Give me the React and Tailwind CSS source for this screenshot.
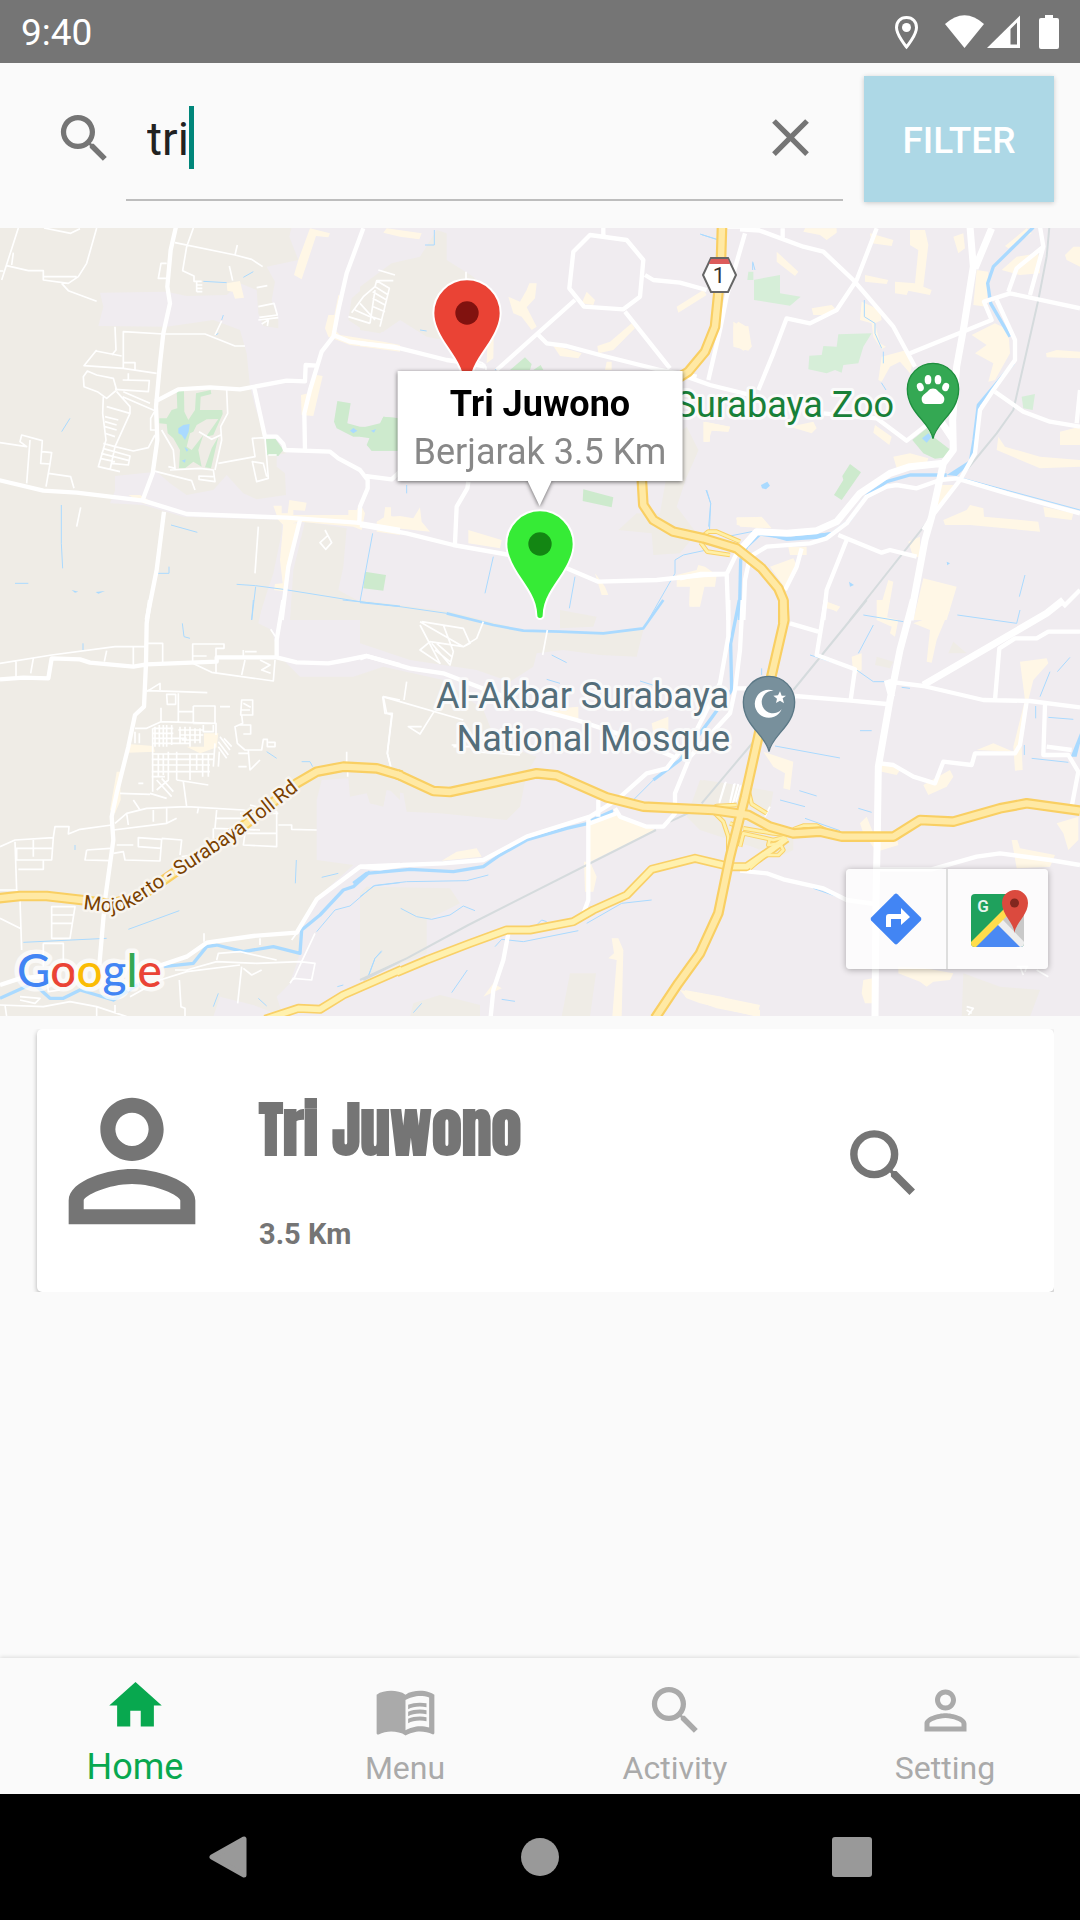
import { useState } from "react";
import { MdClose, MdHome, MdMenuBook, MdPersonOutline, MdSearch } from "react-icons/md";

/* Map drawing: six tiles, each drawn at three units per pixel. */
const TILES = {
  nw: "translate(0 220) scale(0.33333)",
  n: "translate(360 220) scale(0.33333)",
  ne: "translate(680 220) scale(0.33333)",
  sw: "translate(0 600) scale(0.33333)",
  s: "translate(360 600) scale(0.33333)",
  se: "translate(680 600) scale(0.33333)",
};

function Areas({ fill, tiles }) {
  return Object.entries(tiles).map(([tile, d]) => (
    <path key={tile} transform={TILES[tile]} d={d} fill={fill} />
  ));
}

function Lines({ color, width, tiles }) {
  return Object.entries(tiles).map(([tile, d]) => (
    <path
      key={tile}
      transform={TILES[tile]}
      d={d}
      fill="none"
      stroke={color}
      strokeWidth={width}
      strokeLinejoin="round"
    />
  ));
}

const RURAL = {
  nw: "M0 0H880L868 50 895 120 800 140 825 185 815 240 835 300 835 325 790 318 775 280 770 210 720 190 680 225 560 228 500 215 300 218 310 260 295 318 500 320 640 300 720 330 740 400 750 500 765 560 795 650 860 700 830 705 830 740 855 760 858 825 770 838 730 820 680 765 640 810 560 825 510 790 470 755 345 768 345 812 330 850 430 855 550 890 845 900 845 940 820 1060 800 1120 775 1200H0z M915 905L1040 925 1030 1040 1015 1110 1080 1145 1200 1160V1200H870L880 1050z M1055 235L1130 170 1200 150V300L1150 335 1090 330 1045 300z",
  n: "M95 130L180 110 230 30 260 40 260 120 340 170 375 210 360 330 300 370 200 350 120 300 60 340 0 330V200z M940 650L980 620 1015 690 980 770 950 860 1010 940 960 1000 880 1005 875 940 775 930 830 880 900 880z",
  ne: "M0 630L55 690 20 770 0 790z",
  sw: "M0 0H790L775 70 815 90 835 165 900 230 1060 230 1150 200 1200 235V600L1160 560 1150 620 1110 610 1100 580 1050 590 1045 535 965 540 950 600 950 780 1060 795 950 895 895 995 900 1060 870 1150 830 1190 850 1250 760 1215 660 1190 640 1250H0z",
  s: "M0 0L270 35 490 90 600 100 850 90 830 170 720 165 610 150 530 160 520 200 450 245 350 210 150 180 0 130z M0 230L70 200 250 240 370 330 410 430 530 470 500 520 480 620 440 660 240 640 140 635 130 580 80 570 70 615 30 610 20 560 0 560z M600 30L710 50 700 80 600 85z M20 860L270 865 300 910 240 940 200 960V1060L0 1140V880z M630 1120H708L690 1250H605z M160 1210L240 1185 360 1215V1250H150z M1030 540L1100 550 1190 570 1200 750 1130 720 1060 690 1020 660z",
  se: "M60 540L200 560 280 575 270 630 240 660 340 700 340 750 310 765 180 730 60 690 20 650z M850 1120L960 1160 1080 1170 1050 1250H845z M820 125L860 160 805 160z M590 170L640 185 630 205 585 195z",
};

const CREAM = {
  nw: "M930 25L990 40 985 52 948 48 905 178 882 165 895 120z M680 190L720 183 732 233 705 236 698 215 682 212z M1015 225L1030 230 1005 330 1020 345 1150 365 1200 375V395L1050 375 985 350 975 325 985 285 1003 285z M950 465L968 468 940 588 905 585 903 525 925 520z M820 857H845V880H863L868 840 920 848 915 872 880 870 880 885H1045V870H1070L1080 850 1095 880 1085 930 1060 920 900 905 850 915 835 900z M850 910H895L870 1030 860 1115 822 1110 825 1092 848 1090 840 1020z M385 825H420L480 860 430 850z M1130 905L1155 890V862H1173V888L1200 900V945L1130 935z",
  n: "M80 25L185 40 178 58 120 50 70 38z M445 230L480 245 500 210 508 190H530L525 235 500 262 530 320 515 330 485 290 460 280z M950 260L1030 210 1040 225 955 278z M665 250L680 215 705 240 700 255z M712 378L750 365 815 310 825 325 760 390 715 400z M740 425H755V450H735z M1120 305L1145 320 1165 318 1175 380 1150 392 1120 370z M385 300H402L400 415 380 430z M578 375L665 400 655 415 600 408z M1030 605L1110 620 1105 635 1050 630V665H1030z M75 865L90 890 120 888 160 895 180 862 185 905 210 935 110 925 70 905z M325 930L425 960 420 985 325 970z M950 1065L1010 1050 1015 1035 1035 1040 1070 1065 1065 1100H1020L1000 1160 988 1155 990 1100H950z M1130 892H1200V925L1130 915z M705 1060L735 1100 745 1125 725 1125z",
  ne: "M375 25H470V38L440 60 420 45 370 35z M290 95L355 155 345 168 290 125z M690 30H735L745 75 730 200 755 210 750 225 685 212 680 225 645 220V185L705 190 715 90 690 75z M570 40L640 60 635 78 575 70z M555 165L625 180 620 192 555 185z M1040 25L1055 40 985 85 975 78z M820 50L850 40 855 85 835 100z M1155 105L1180 80H1200V140L1160 120z M160 320L175 305 200 320 215 380 205 392 160 380z M395 265L455 255 465 265 440 285 400 285z M545 245L600 270 605 300 585 310 600 370 618 380 605 388 580 350 575 310 540 300z M965 150L1010 110 1075 100 1080 160 1020 165z M890 150L925 155 920 260 880 255z M875 345L945 310 985 330 990 400 945 480 925 485 940 430 885 400 920 375z M1098 400L1130 390 1200 395V415L1100 412z M605 410L680 390 700 420 690 460 660 425 630 440 605 485 595 480z M585 615L635 650 628 675 580 638z M330 620L400 605 410 625 395 640z M75 605L150 620 145 635 95 632 85 665H72z M640 710L690 700 745 715 740 730 650 745z M955 650L975 680 1080 710 1200 720V740L1080 745 950 690z M1140 635L1200 620V675H1140z M790 900L860 870 870 855 910 865 912 890 1075 905 1080 935 870 915 795 915z M1090 860L1180 880 1175 900 1095 890z M168 895L245 890 275 925 180 920z M270 1040L340 1015 355 1045 320 1110 305 1090z M325 980H380V1005H330z M685 965L720 950V1010L700 1012z M730 1075L830 1100 800 1200H700z M625 1080L640 1085 620 1200H590z M30 1090L60 1060 80 1070 60 1160H28z M780 795H825L770 880z M440 1145L480 1160 470 1172 440 1165z",
  sw: "M385 432L460 438 465 455 385 458z M350 515H360L362 600 345 640 330 630z M612 400H655L650 440H612z M560 440L655 440 600 460z",
  s: "M690 655L780 645 885 690 690 785z M290 755L350 745 365 770 245 782z M672 785H690L710 830 700 875H675z M755 1015H775L790 1050 785 1250H757L770 1080 745 1075 762 1060z M975 1170L1085 1190 1200 1230V1250L1070 1225 975 1190z M370 1190L400 1150 425 1165z M540 330L655 320V355L600 350z M875 370L925 350 925 390 945 410 880 400z",
  se: "M590 0H630L615 50 655 60 645 110 630 100 635 80 590 60z M700 70L755 50 760 0H815L795 60 770 120 755 188 740 185 750 90z M440 5L480 20 470 35 440 20z M515 170L545 160V210L520 225z M250 455L340 485 330 570 310 565 315 520 280 500z M1020 185L1100 175 1105 190 1060 240 1045 300 1025 440 1028 510 1005 512 1000 440 1035 300z M600 480L660 510 650 525 605 515z M730 555L810 510 820 530 800 560 745 585z M890 450L940 430 1000 455z M560 650L580 700 650 710 655 735 590 755 550 700 540 670z M995 720H1012L1020 745 1125 765 1110 800 1010 805z M1130 670L1195 650V720L1165 750 1150 700z M655 1100L735 1105 820 1120 810 1140 760 1145 740 1160 720 1145 655 1120z M550 1140L578 1135V1210H555L545 1180z M0 1170L120 1190 240 1215 230 1250 60 1210 20 1195z M785 20L810 30 780 90z",
};

const GREEN = {
  nw: "M530 513H552L553 575 565 600 585 570 588 520 632 510 634 522 602 530 600 570 667 570 668 582 640 645 618 650 655 597 620 598 590 615 580 635 570 640 560 680 575 690 610 645 595 690 605 740 580 725 555 745 537 745 540 690 520 655 503 640 500 612 478 610V595L500 595 515 570 532 565z M655 650L633 745 615 742 635 685z M797 658L825 655 850 690 835 708 800 705z M1012 543L1052 550 1042 610 1080 620 1140 622 1150 590 1200 595V692H1115L1100 675 1110 650 1060 650 1010 625 1002 605z M1095 1055L1158 1065 1150 1112 1090 1105z",
  n: "M0 625L60 610 70 590 115 595V692L35 692 22 675 30 655 0 650z M670 808L760 832 755 862 668 843z M450 450L495 412 515 432 510 450z M520 450L542 435 550 450z",
  ne: "M510 732L543 757 485 840 462 825 490 780 487 768z M740 625L760 650 812 690 800 712 765 716 730 700 697 660z",
};

const GREEN_LIGHT = {
  ne: "M205 155H220V180L300 165 300 220 362 230 330 257 222 240 222 180 202 180z M475 343L575 340 550 380 535 430 490 435 485 458 465 450 440 460 385 448 388 407 425 405 430 378 470 380z M1025 530L1065 522 1058 570 1030 565z",
};

const WATER = {
  nw: "M535 625L550 615 569 612 566 635 555 660 545 645 535 640z M1050 632L1060 624 1072 632 1060 640z M1113 632L1128 627 1122 638z M545 722L557 718 555 728z M553 680L565 690 560 695z M215 1110L235 1115 225 1118z M287 1116L315 1113 295 1121z",
  ne: "M243 795L262 785 270 797 258 808 246 805z M726 655L745 640 755 650 740 668z M800 765L870 720 860 740 830 768z M240 940L340 952 460 935 440 955 320 963z M507 1085L522 1095 510 1100z M800 1025L810 1030 802 1036z",
  s: "M690 658L758 628 760 640 695 668z",
  se: "M1172 470L1200 400V430L1190 470z",
};

const RIVER_WIDE = {
  ne: "M1060 22L940 140 923 190 932 250 990 350M1000 430L895 555 882 660 872 720M800 765H690L620 785 562 825 505 905 455 942 330 955 240 942 200 980 182 1020 178 1200",
  s: "M1138 0L1112 130 1115 270 1050 360 960 480 880 540M685 670L620 685 500 720 420 765 370 800 280 815 150 808 20 820-20 850",
  sw: "M1110 815L1060 860 1030 870 960 945 905 990 900 1060 820 1040 730 1055 650 1035 620 1040 580 1090 490 1100M420 1150L340 1200 240 1170 190 1195 150 1195 100 1150 0 1195",
};

const STREAMS = {
  nw: "M710 1093L767 1097 850 1108 1080 1145 1200 1160M1118 940L1080 1145M767 1100L755 1200M184 855V970L188 1045M210 595L185 635M513 915L592 937M470 1060H507V1040M45 1090H85M610 184L680 188M730 172L760 155M665 300L670 285M647 345L655 340",
  n: "M223 30V75L195 75M1020 42L1070 58M945 1060V1020L970 1005 1040 990M865 1200L945 1060M1038 810L1052 850 1048 940M1100 950L1200 930M400 1010L375 1120M645 1070L628 1165M140 795V820M180 330L200 333M1178 125L1185 150M405 450L440 430",
  ne: "M65 44L110 58M218 128V150M553 240V290L585 310V340L605 385M610 395V430M604 488L618 510M80 810L92 850 86 920M830 770L1200 870M1035 1065L1018 1130",
  sw: "M760 0L755 60M1028 0L1200 18M547 70L552 110 570 115M249 130V150M800 455L830 475M905 485H930L938 500M225 735V750M385 988L538 932M70 1027L320 1015M1200 848L1120 858 1050 918 1005 930 950 995M889 780L886 850M965 832L1015 820M1145 1052L1125 1075 1105 1130M1012 1160L1030 1155M655 1180L640 1220M775 1195L800 1218",
  s: "M0 8L120 20 260 40 400 75 490 92M575 165L620 188M560 238L600 250M840 243L900 262M880 540L820 600M0 890L45 856 140 845 320 842 385 825M122 925L170 950 215 958 270 945 310 918 345 932M22 1135L45 1075 65 1055M405 1040L425 1018 490 1025 655 992M530 975L545 960 560 965M680 970L785 910 875 900M322 1110L275 1178M160 1238L185 1210M425 1198L465 1204",
  se: "M832 45L1010 70 1020 30M550 45L670 65M580 75L535 160M390 165L530 210 580 245 620 245M245 205V225M540 392H575M285 438L480 474M358 572L410 588M300 600L375 620M535 625L575 637M375 655L480 692M1170 172L1132 215M1110 215L1080 290M1067 318V355M1105 352L1180 358M1033 435V465M1055 475L1165 487M400 865L500 900M665 262L690 265",
};

const CANAL = {
  s: "M260 40L400 75 490 92 600 95 730 100 850 85 910 0",
};

const RAIL = {
  ne: "M1108 22L1100 110 1075 240 1000 570 950 640 860 750 755 890 510 1200",
  se: "M560 0L340 270M225 420L65 610",
  s: "M1005 630L930 665M888 690L325 975 140 1075 0 1140",
  sw: "M1200 1085L1090 1140",
};

const ROADS_MAJOR = {
  nw: "M528 20L512 90 502 200 510 250 490 340 480 430 468 560 472 660 458 760 428 840M492 875L470 1050 440 1200M-5 780L130 812 230 818 430 842 560 882 860 893 1070 908 1200 930M1090 25L1040 160 1015 270 1000 350 965 395 930 510 913 580 915 690M465 545L535 508 630 502 720 508 860 482 915 484 917 435 950 437M762 500L795 650 830 650 850 672 855 690 990 695 1015 715 1080 750 1103 780 1103 805 1080 860 1078 905M1095 768L1175 778 1200 755M1000 345L1050 365 1200 385M900 900L865 1040 845 1200",
  sw: "M450 0L440 70 438 190 432 320 405 345 385 440 350 580 335 650 340 720 315 900 298 1095M850 0L830 120V172M0 238L70 233 145 235 155 175 240 178 270 188 400 200 440 193 650 185V172H830L890 187 985 190 1040 180 1100 168 1200 195M0 1155L60 1135 140 1128M440 1110L560 1070 620 1028 760 1008 890 998 950 898 1080 800 1200 795",
  n: "M1078 20H1200M0 370L100 380 260 420 330 430 375 440M620 1045L715 1085 890 1080 1030 1065 1100 1062M0 915L140 940 280 975 450 1005M325 785L322 805 290 860 285 970M690 45L640 95 628 205 672 260 790 268 840 230 850 120 800 60zM730 20V45M645 240L410 450M530 340L560 370 620 378 720 405 900 450 1010 470M795 275L930 445M855 165L880 180 960 188 1040 210M1155 40L1100 230 1080 330 1045 480",
  ne: "M180 28L240 32 370 80 430 95 520 180 640 320 705 440M590 25L530 180 470 270 390 310 320 295 280 400 235 510M308 25V55M20 470L90 495 230 530M430 580L590 595 680 662 740 615M690 400L935 300 912 245 990 220 1200 265M950 240L1005 360V420L940 510 900 570 885 700 840 780 755 890 730 930M1080 20L1090 80 1010 145 985 215M1090 80L1050 225M945 515L1030 575 1110 605 1200 620M1200 510L1190 610M475 945L605 998 630 990 710 1010M500 960L440 1110 430 1200M175 990L140 1062 145 1200M0 1075L60 1062H140M190 1200L195 1080 210 1010 260 980 390 970 440 955 500 910 560 830 620 800 650 795 710 805 780 780 830 775 980 820 1200 880M365 985L350 1040 315 1110M1200 1110L1150 1160",
  s: "M1105 0V110L1080 250 1010 390 920 505 860 520 770 600 690 650 500 710 370 780 250 790 130 795 60 805 0 800M1148 0L1140 150 1125 270 1110 340 990 470 945 580V640L910 680 860 680 780 650 765 625M0 175L20 168 150 205 250 220 380 270 540 330 650 360 800 410 940 470M715 600V650M690 670L770 640M685 655V900L672 935M445 1000L430 1080 400 1170 392 1250",
  se: "M330 70L415 95M437 0L410 165 525 208 512 300M165 265H200M345 288L512 302 620 312M625 245L730 258 910 300 1050 303 1200 322M945 300L958 145 1005 115 1070 115 1105 95H1200M1040 305L1020 435 1005 460H885L875 495 790 485 765 550 700 530 640 495 600 490M1095 315L1090 465H1165L1195 515 1175 620M1100 440L1175 450M180 812L260 820 310 838 430 865 500 900 585 912M580 808H755L890 770 960 760 1110 780 1200 795",
};

const ROADS_WIDE = {
  ne: "M870 20L880 140 850 330 830 440 818 600 820 690 790 730 690 740 630 760 540 820 470 905 410 932 320 940 230 935 185 985M935 25L885 145M780 600L820 660M790 730L755 890 735 960 690 1200",
  se: "M700 0L660 150 630 300 595 500 592 700 588 900 585 1250M1150 0L1100 40 730 255M622 240L635 290",
};

const ROADS_MINOR = {
  nw: "M55 24L5 180M0 153H10M20 137L85 152 130 152V180L205 190 235 170 260 130 290 24M130 170H230M185 190L205 212 290 244M132 24L212 40 240 26M40 98L35 135M500 130H483L475 175H500M580 24L560 80 548 152 582 168V184H605M590 195H607M590 205H607M590 215H607M590 185V215M525 68L705 105 755 118 788 140M712 75L705 105M688 138L698 182M770 203L802 197M775 260L822 250 832 285 778 292M775 300L835 293M785 312L805 300 802 318M345 320L348 390 335 405M370 445V335L490 342 615 342 705 378H735M645 345L665 303M288 393L365 408M290 390L252 437 370 445 470 460M370 428H405V450M385 460V480M368 480L448 482 445 515 345 508M370 515L450 550M368 530L465 572 452 595V630H465M250 470L262 453 290 465 340 475 350 510 320 535 292 515 252 500zM310 530L308 580 318 660 295 740 360 755M320 560L390 580M350 515L390 560V580L345 680 330 750M315 590L355 600M315 605L350 615M315 620L350 630M315 640L345 650M310 670L345 680M308 685L390 708 385 735 335 730M303 700L388 722M300 715L345 725M345 680L400 693 445 683 465 645M485 630L520 690 525 745 505 740M458 752L575 782 585 810M510 750L600 745 640 750 645 785 597 778V768L640 770M680 510L683 580 662 620 665 660 645 750M597 635L635 658 662 645M655 730L765 710 757 655 795 653 805 775 770 785 757 725 790 730 800 770M805 705H830M0 668L80 680 60 665 65 645 127 662 122 730 150 732 155 698 127 695M90 660L80 790M150 732L138 800M145 760L212 770 222 805M242 862L230 920M775 920L765 1060M975 930L995 968 977 988 960 968 985 945M1055 278L1090 230 1125 200 1130 182 1180 182M1130 182L1168 205 1140 320M1045 290L1110 310M1065 270L1110 290M1080 250L1125 300M1125 210L1110 310M1125 200L1165 225M1118 215L1160 240M1118 235L1155 255M1120 260L1155 275M1115 290L1145 300M1135 150L1185 165",
  n: "M318 155V185M355 425Q380 430 378 450",
  sw: "M0 190L155 165 345 140H435M48 185V230M100 175L92 220M320 152L313 185M400 140V200M440 130H488V190M578 183V132H672V145H648V185M580 168H620M578 190L635 217 820 243 825 180M648 190V217M735 155H770M730 150V168M735 180L725 225M780 180L810 195 785 210 812 220M812 88L830 115M440 275L480 250V270M440 272L540 275 622 278M500 283H527V313H502zM535 280V365M535 335H580M580 318H645V370H580V318M660 320H690M483 323V365L440 385H405M483 365L648 370V405M725 300H758V345H722zM730 310L752 322M725 330H750M725 345L728 370 705 380 712 430 735 450 785 450 790 418H802V440H825V427H805M715 375H752V402H730M715 460H745M745 452L750 510 780 480M715 500H740M458 385V575M465 380V440M478 375V440M490 375V440M500 375V440M515 375V435M540 380V430M555 380V430M570 380V440M585 385V430M600 385V430M460 385H520M460 400H520M460 415H560M460 430H570M535 390H610M540 405H610M545 420H600M610 375V395H640V375M405 395V430M418 400V430M660 410L690 450M672 415L695 440M655 425L685 465M655 440L680 475M645 430L640 500M658 455L655 500M455 462H640M455 478H640M455 495H630M455 515H630M475 460V530M490 460V525M505 455V540L470 570M530 455V540M570 460V540M590 460V510M608 460V530M625 460V530M530 540L625 555M455 530H495M470 540L515 590M485 535L520 575M450 580L500 595M360 580L450 583M415 550H430M550 545L560 620M345 670L380 640 440 625 560 620 730 630 770 640M380 640L385 675M400 600L420 630M340 690L500 670 530 655M460 630V665M500 625V670M595 625L592 640M650 630L645 685 780 690M645 655H725M640 685V760M0 740L45 720 160 713 155 780H50V745M45 725L50 870 60 900 65 1050M55 808H130V780M45 745H155M100 720V770M0 870H50M0 955L60 985M160 712L165 680H207L205 702 240 688 335 675M260 750L255 780 330 782M260 750L330 745M340 760L370 755 375 780 480 783 485 718 415 713V740L485 745M350 735H400M485 715L545 720 540 765M545 770L640 760M735 700L730 735 830 740V635L750 615M720 640H835M835 675H875V688L950 690M730 700H830M155 920H225L210 1015 155 1015zM155 945H220M155 970H215M130 1030H190V1100M130 1030V1100M612 1000V1025M780 1015V1035M875 1020L890 1000M525 1110L560 1110 650 1085 770 1090 900 1085 945 1090 935 1140 880 1135 870 1150M945 1000L905 1085 880 1140M650 1080L655 1060 720 1055 830 1080M480 1140L560 1115 720 1095M390 1190L480 1140M60 1190L120 1195 105 1210 60 1200M0 1215L130 1220 210 1205 290 1220 380 1250M290 1220V1250M345 1215V1240M15 1215L20 1250M538 1140L543 1220 555 1225V1250M725 1100L713 1210M730 1105L755 1125 785 1110M1200 300L1150 290 1160 340 1175 345 1162 460 1172 500M1040 455V490M1043 510V530M140 1130L145 1175 180 1170",
  s: "M140 245L132 300M68 290L310 360M68 290L75 340H97L82 460 92 498M222 335L180 402 145 380 185 380M562 90L548 165M370 65L350 115 310 140 180 65M180 75L240 190 180 150 210 125 310 140 330 130 310 85 185 65M250 75L280 155 270 195 215 130M230 130L275 170M225 150L270 185M280 440H330M275 435H300M340 455L480 465M1098 545L1078 610M1125 550L1110 610M1135 552L1118 610",
  se: "M135 548L118 605M162 552L150 605M175 552L162 605M182 556L168 605M270 620L255 650M1010 1100H1045M1020 1100L1030 1125M1040 1100L1035 1115M1070 1110L1105 1130M860 1220L880 1225 865 1245M860 1230L875 1240",
};

const TOLL = {
  n: "M1086 20L1082 150 1065 320 1035 395 985 455 930 490M845 770L850 855 880 900 940 935 1030 955 1130 985 1205 1045 1255 1105 1270 1140V1210",
  sw: "M-5 895L60 888H140L245 900 330 912 420 890 520 820 740 670 890 550 950 515 1030 500 1130 505 1205 527",
  s: "M110 522L220 573 270 576 400 548 530 520 590 526 740 592 850 620 1060 630 1165 645 1230 680 1300 700 1380 695 1445 710H1600L1680 660 1780 665 1920 625 2000 610 2160 632",
  se: "M310 0L313 60 275 225 235 410 195 590 150 770 115 940 60 1060-5 1150-75 1255",
};
const HIGHWAY = {
  sw: "M795 1258L895 1225 960 1228 1030 1185 1205 1108",
  s: "M110 1118L200 1080 330 1030 440 990H510L640 965 700 930 800 885 875 808 1005 775 1110 800H1160L1240 745 1280 715",
};
const RAMPS = {
  n: "M1020 955L1045 935H1070L1140 965M1022 968L1042 995 1110 1005",
  se: "M90 628L110 618 170 615M105 640L130 665 145 710V760M150 670L175 680M205 570L215 612 260 640M190 685L280 700 330 705M180 740L190 700 280 720 320 710M270 715L265 735 300 730 310 750 295 765 255 765 210 805M340 688L370 677H410L440 692",
};

const MARKER =
  "M-98 0A98 98 0 0 1 98 0C98 30 83 60 66 87C36 132 9 166 8 214A8 8 0 0 1-8 214C-9 166-36 132-66 87C-83 60-98 30-98 0z";
const POI = "M0 149C-8 100-77 72-77 0A77 77 0 0 1 77 0C77 72 8 100 0 149z";

function Marker({ x, y, fill, dot }) {
  return (
    <g transform={`translate(${x} ${y}) scale(0.33333)`}>
      <path d={MARKER} fill={fill} stroke="#fff" strokeWidth="12" paintOrder="stroke" />
      <circle r="35" fill={dot} />
    </g>
  );
}

function MapDrawing() {
  return (
    <svg viewBox="0 228 1080 788" className="block h-full w-full" role="img" aria-label="Map of Surabaya">
      <rect y="228" width="1080" height="788" fill="#f0ecf0" />
      <Areas fill="#efece6" tiles={RURAL} />
      <Areas fill="#fff7e6" tiles={CREAM} />
      <Areas fill="#cdeacd" tiles={GREEN} />
      <Areas fill="#d6eed8" tiles={GREEN_LIGHT} />
      <Areas fill="#aadaff" tiles={WATER} />
      <Lines color="#aadaff" width="3" tiles={STREAMS} />
      <Lines color="#aadaff" width="8" tiles={CANAL} />
      <Lines color="#aadaff" width="10" tiles={RIVER_WIDE} />
      <Lines color="#d5dbdd" width="6" tiles={RAIL} />
      <Lines color="#fff" width="5" tiles={ROADS_MINOR} />
      <Lines color="#fff" width="13" tiles={ROADS_MAJOR} />
      <Lines color="#fff" width="21" tiles={ROADS_WIDE} />
      <Lines color="#fad168" width="14" tiles={RAMPS} />
      <Lines color="#f9d067" width="27" tiles={HIGHWAY} />
      <Lines color="#fff1ae" width="17" tiles={HIGHWAY} />
      <Lines color="#fff0a8" width="8" tiles={RAMPS} />
      <Lines color="#f9cf63" width="32" tiles={TOLL} />
      <Lines color="#ffe9a4" width="19" tiles={TOLL} />

      {/* Road shield */}
      <path d="M703 275L711 258H728L736 275 728 292H711z" fill="#fff" stroke="#666" strokeWidth="2" />
      <path d="M711 259H728L730 264H709z" fill="#dd5b5b" />
      <text x="719" y="283" textAnchor="middle" fontSize="22" fill="#333">1</text>

      {/* Place names */}
      <g fontSize="36" textAnchor="end" stroke="#fafafa" strokeWidth="6" strokeLinejoin="round" paintOrder="stroke">
        <text x="894" y="417" fill="#188038">Surabaya Zoo</text>
        <text x="729" y="708" fill="#546e7a">Al-Akbar Surabaya</text>
        <text x="730" y="751" fill="#546e7a">National Mosque</text>
      </g>
      <path id="toll-road-label" d="M83 909L108 912Q122 913 138 903L182 874 240 836 310 781" fill="none" />
      <text fontSize="20" fill="#7a4100" stroke="#f8f5ef" strokeWidth="5" strokeLinejoin="round" paintOrder="stroke">
        <textPath href="#toll-road-label">Mojokerto - Surabaya Toll Rd</textPath>
      </text>

      {/* Zoo */}
      <g transform="translate(933 389) scale(0.33333)">
        <path d={POI} fill="#34a853" stroke="#1e8e3e" strokeWidth="4" />
        <g fill="#fff">
          <ellipse cx="-38" cy="-6" rx="10" ry="13" transform="rotate(-20 -38 -6)" />
          <ellipse cx="-15" cy="-28" rx="10" ry="14" />
          <ellipse cx="15" cy="-28" rx="10" ry="14" />
          <ellipse cx="38" cy="-6" rx="10" ry="13" transform="rotate(20 38 -6)" />
          <path d="M-34 30C-34 18-22 14-15 6C-8-4 8-4 15 6C22 14 34 18 34 30C34 42 26 46 18 45H-18C-26 46-34 42-34 30z" />
        </g>
      </g>
      {/* Mosque */}
      <g transform="translate(769 702) scale(0.33333)">
        <path d={POI} fill="#78909c" stroke="#5b7886" strokeWidth="4" />
        <path d="M14-34A42 42 0 1 0 38 22A34 34 0 1 1 14-34z" fill="#fff" />
        <path d="M33-32L38-19 51-19 41-11 45 4 33-4 21 3 24-10 13-19 27-20z" fill="#fff" />
      </g>

      <Marker x="467" y="313" fill="#ea4335" dot="#81120f" />
      <Marker x="540" y="544" fill="#36eb36" dot="#138613" />

      <text
        x="17"
        y="987"
        fontSize="46"
        fontWeight="500"
        stroke="#ffffff"
        strokeOpacity="0.7"
        strokeWidth="9"
        strokeLinejoin="round"
        paintOrder="stroke"
        className="font-['Lato',sans-serif]"
      >
        <tspan fill="#4285f4">G</tspan>
        <tspan fill="#ea4335">o</tspan>
        <tspan fill="#fbbc04">o</tspan>
        <tspan fill="#4285f4">g</tspan>
        <tspan fill="#34a853">l</tspan>
        <tspan fill="#ea4335">e</tspan>
      </text>
    </svg>
  );
}

function DirectionsIcon() {
  return (
    <svg viewBox="0 0 52 52" className="size-[52px]" aria-hidden="true">
      <path d="M24.500 1.200Q26 0 27.500 1.200L50.800 24.500Q52 26 50.800 27.500L27.500 50.800Q26 52 24.500 50.800L1.200 27.500Q0 26 1.200 24.500z" fill="#4285f4" />
      <path d="M16 34V24Q16 21 19 21H31V15L40 24 31 32V26H21V34z" fill="#fff" />
    </svg>
  );
}

function MapsIcon() {
  return (
    <svg viewBox="0 0 58 58" className="ml-1 size-[58px]" aria-hidden="true">
      <clipPath id="maps-tile">
        <rect x="0" y="4" width="53" height="53" rx="4" />
      </clipPath>
      <g clipPath="url(#maps-tile)">
        <rect y="4" width="53" height="53" fill="#1fa15d" />
        <path d="M53 4V57L28 34 38 20z" fill="#c9c9c9" />
        <path d="M0 62L27 33 53 58V62z" fill="#4a89f3" />
        <path d="M26 34L31 29 58 57H49z" fill="#eee" />
        <path d="M-3 55L38 14 42 20-1 63z" fill="#ffdd4b" />
      </g>
      <text x="12" y="22" textAnchor="middle" fontSize="17" fontWeight="600" fill="#e8f5ee">G</text>
      <path d="M43.500 43C43 33 31 25 31 13A13 13 0 0 1 57 13C57 25 44.500 33 43.500 43z" fill="#db4a3e" />
      <circle cx="43.500" cy="13" r="4.500" fill="#81271f" />
    </svg>
  );
}

function StatusIcons() {
  return (
    <svg viewBox="895 0 166 63" className="h-[63px] w-[166px]" role="img" aria-label="Location on, Wi-Fi, mobile signal, battery full">
      <path d="M906.500 16.500C900 16.500 896.500 21 896.500 26.500C896.500 34 906.500 46 906.500 46S916.500 34 916.500 26.500C916.500 21 913 16.500 906.500 16.500z" fill="none" stroke="#fff" strokeWidth="3" />
      <circle cx="906.500" cy="26.500" r="4.500" fill="#fff" />
      <path d="M945 23Q964.500 5.500 984 23L964.500 47z" fill="#fff" />
      <path d="M987 47L1020 14.500V47z" fill="#fff" />
      <path d="M1010.500 28L1017 21.500V43.500H1010.500z" fill="#757575" />
      <path d="M1045 14H1053V17H1057Q1059 17 1059 19V46Q1059 48 1057 48H1041Q1039 48 1039 46V19Q1039 17 1041 17H1045z" fill="#fff" />
    </svg>
  );
}

const NAV = [
  { label: "Home", Icon: MdHome },
  { label: "Menu", Icon: MdMenuBook },
  { label: "Activity", Icon: MdSearch },
  { label: "Setting", Icon: MdPersonOutline },
];

export default function App() {
  const [query, setQuery] = useState("tri");

  return (
    <div className="flex min-h-screen flex-col bg-[#fafafa] font-['Roboto',sans-serif] text-[#757575]">
      <div className="flex h-[63px] items-center justify-between bg-[#757575] pt-[2px] pr-[19px] pl-[21px] text-white">
        <span className="text-[37px] leading-none">9:40</span>
        <StatusIcons />
      </div>

      <header className="flex items-start gap-[21px] pt-[13px] pr-[26px] pb-[26px] pl-[53px]">
        <form className="flex flex-1 gap-[10px]" onSubmit={(e) => e.preventDefault()}>
          <label htmlFor="search" aria-label="Search" className="flex items-center">
            <MdSearch className="size-[63px]" />
          </label>
          <div className="flex h-[125px] flex-1 items-center border-b-2 border-[#bdbdbd] pr-[21px] pl-[21px]">
            <input
              id="search"
              value={query}
              onChange={(e) => setQuery(e.target.value)}
              className="field-sizing-content pt-1 text-[46px] leading-[63px] text-[#212121] caret-transparent outline-none"
            />
            <span className="h-[63px] w-[5px] bg-[#00867a]" />
            <button type="button" aria-label="Clear" className="ml-auto" onClick={() => setQuery("")}>
              <MdClose className="size-[63px]" />
            </button>
          </div>
        </form>
        <button type="button" className="h-[126px] w-[190px] bg-[#add8e6] pt-1 text-[37px] font-medium text-white shadow-[0_1px_5px_rgba(0,0,0,0.2)]">
          FILTER
        </button>
      </header>

      <section className="relative aspect-[1080/788] w-full overflow-hidden">
        <MapDrawing />
        <div className="absolute top-[35.300%] left-1/2 flex -translate-x-1/2 -translate-y-full flex-col items-center drop-shadow-[0_1px_2px_rgba(0,0,0,0.6)]">
          <div className="bg-white px-4 pt-[9px] pb-[5px] text-center whitespace-nowrap">
            <p className="text-[36px] leading-[48px] font-bold text-black">Tri Juwono</p>
            <p className="text-[36px] leading-[48px] text-[#888]">Berjarak 3.5 Km</p>
          </div>
          <svg viewBox="0 0 24 25" className="h-[25px] w-6" aria-hidden="true">
            <path d="M0 0H24L12 25z" fill="#fff" />
          </svg>
        </div>
        <div className="absolute right-8 bottom-[47px] flex h-[100px] w-[202px] divide-x-2 divide-[#dedede] rounded bg-white/80 shadow-[0_1px_6px_rgba(0,0,0,0.3)]">
          <button type="button" aria-label="Directions" className="flex flex-1 items-center justify-center">
            <DirectionsIcon />
          </button>
          <button type="button" aria-label="Open in Google Maps" className="flex flex-1 items-center justify-center">
            <MapsIcon />
          </button>
        </div>
      </section>

      <main className="flex-1 pt-[13px] pr-[26px]">
        <div className="overflow-hidden pl-[37px]">
          <article className="flex h-[263px] items-center rounded-[5px] bg-white pr-[126px] shadow-[0_2px_5px_rgba(0,0,0,0.3)]">
            <MdPersonOutline className="size-[190px]" />
            <div className="ml-8 flex-1 self-start pt-[61px]">
              <h2 className="font-['Anton','Impact','Roboto',sans-serif] text-[60px] leading-[80px] font-black">
                Tri Juwono
              </h2>
              <p className="mt-[45px] text-[29px] leading-[38px] font-bold">3.5 Km</p>
            </div>
            <button type="button" aria-label="View Tri Juwono" className="pt-[5px]">
              <MdSearch className="size-[89px]" />
            </button>
          </article>
        </div>
      </main>

      <nav className="grid h-[136px] grid-cols-4 shadow-[0_-1px_4px_rgba(0,0,0,0.12)]">
        {NAV.map(({ label, Icon }, i) => (
          <a
            key={label}
            href={`#${label.toLowerCase()}`}
            aria-current={i === 0 ? "page" : undefined}
            className={
              i === 0
                ? "flex flex-col items-center pt-4 text-[36px] leading-[60px] text-[#08a84f]"
                : "flex flex-col items-center pt-[21px] text-[32px] leading-[52px] text-[#aaa]"
            }
          >
            <Icon className="size-[63px]" />
            {label}
          </a>
        ))}
      </nav>

      <div className="grid h-[126px] grid-cols-3 items-center justify-items-center bg-black px-[72px] text-[#999]">
        <button type="button" aria-label="Back">
          <svg viewBox="0 0 38 42" className="h-[42px] w-[38px]" aria-hidden="true">
            <path d="M3 21L35 3V39z" fill="currentColor" stroke="currentColor" strokeWidth="5" strokeLinejoin="round" />
          </svg>
        </button>
        <button type="button" aria-label="Home screen" className="size-[38px] rounded-full bg-[#999]" />
        <button type="button" aria-label="Recent apps" className="size-10 rounded-[3px] bg-[#999]" />
      </div>
    </div>
  );
}
